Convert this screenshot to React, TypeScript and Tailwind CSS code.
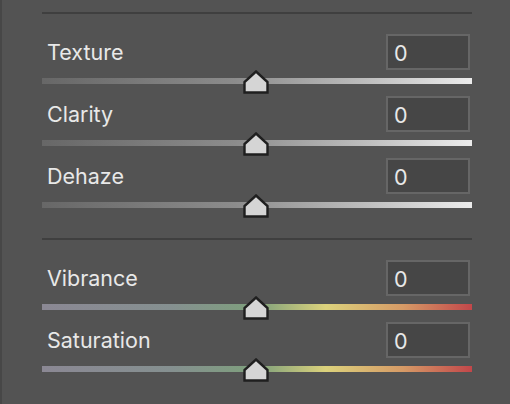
const toneTrack = 'bg-[linear-gradient(to_right,#676767,#8c8c8c_45%,#bdbdbd_75%,#ececec)]';
const colorTrack =
  'bg-[linear-gradient(to_right,#8b8894,#859090_30%,#7ea07c_50%,#dcd27c_66%,#d69a66_84%,#c2474a)]';

interface SliderRowProps {
  label: string;
  value: string;
  track: string;
}

function Thumb() {
  return (
    <svg className="absolute left-1/2 top-[-8px] -ml-[14px] h-[24px] w-[26px]" viewBox="0 0 26 24">
      <path d="M13 1.5 L24.5 12 V22.5 H1.5 V12 Z" fill="#d5d5d5" stroke="#1f1f1f" strokeWidth="2.4" strokeLinejoin="miter" />
    </svg>
  );
}

function SliderRow({ label, value, track }: SliderRowProps) {
  return (
    <div className="pb-[12px]">
      <div className="flex h-[36px] items-center justify-between pr-[2px]">
        <span className="pl-[5px] pt-[2px] text-[21.5px] leading-none text-[#e8e8e8]">{label}</span>
        <div className="flex h-[36px] w-[84px] items-center border-2 border-[#666666] bg-[#464646] pl-[6px] pt-[4px] text-[21.5px] leading-none text-[#e8e8e8]">
          {value}
        </div>
      </div>
      <div className={`relative mt-[8px] h-[6px] ${track}`}>
        <Thumb />
      </div>
    </div>
  );
}

export default function App() {
  return (
    <div
      className="h-[404px] w-[510px] overflow-hidden border-l-2 border-[#474747] bg-[#535353]"
      style={{ fontFamily: 'Inter, "Liberation Sans", sans-serif' }}
    >
      <div className="ml-[40px] w-[430px]">
        <div className="mt-[12px] h-[2px] bg-[#3f3f3f]" />
        <div className="mt-[20px]">
          <SliderRow label="Texture" value="0" track={toneTrack} />
          <SliderRow label="Clarity" value="0" track={toneTrack} />
          <SliderRow label="Dehaze" value="0" track={toneTrack} />
        </div>
        <div className="mt-[18px] h-[2px] bg-[#3f3f3f]" />
        <div className="mt-[20px]">
          <SliderRow label="Vibrance" value="0" track={colorTrack} />
          <SliderRow label="Saturation" value="0" track={colorTrack} />
        </div>
      </div>
    </div>
  );
}
